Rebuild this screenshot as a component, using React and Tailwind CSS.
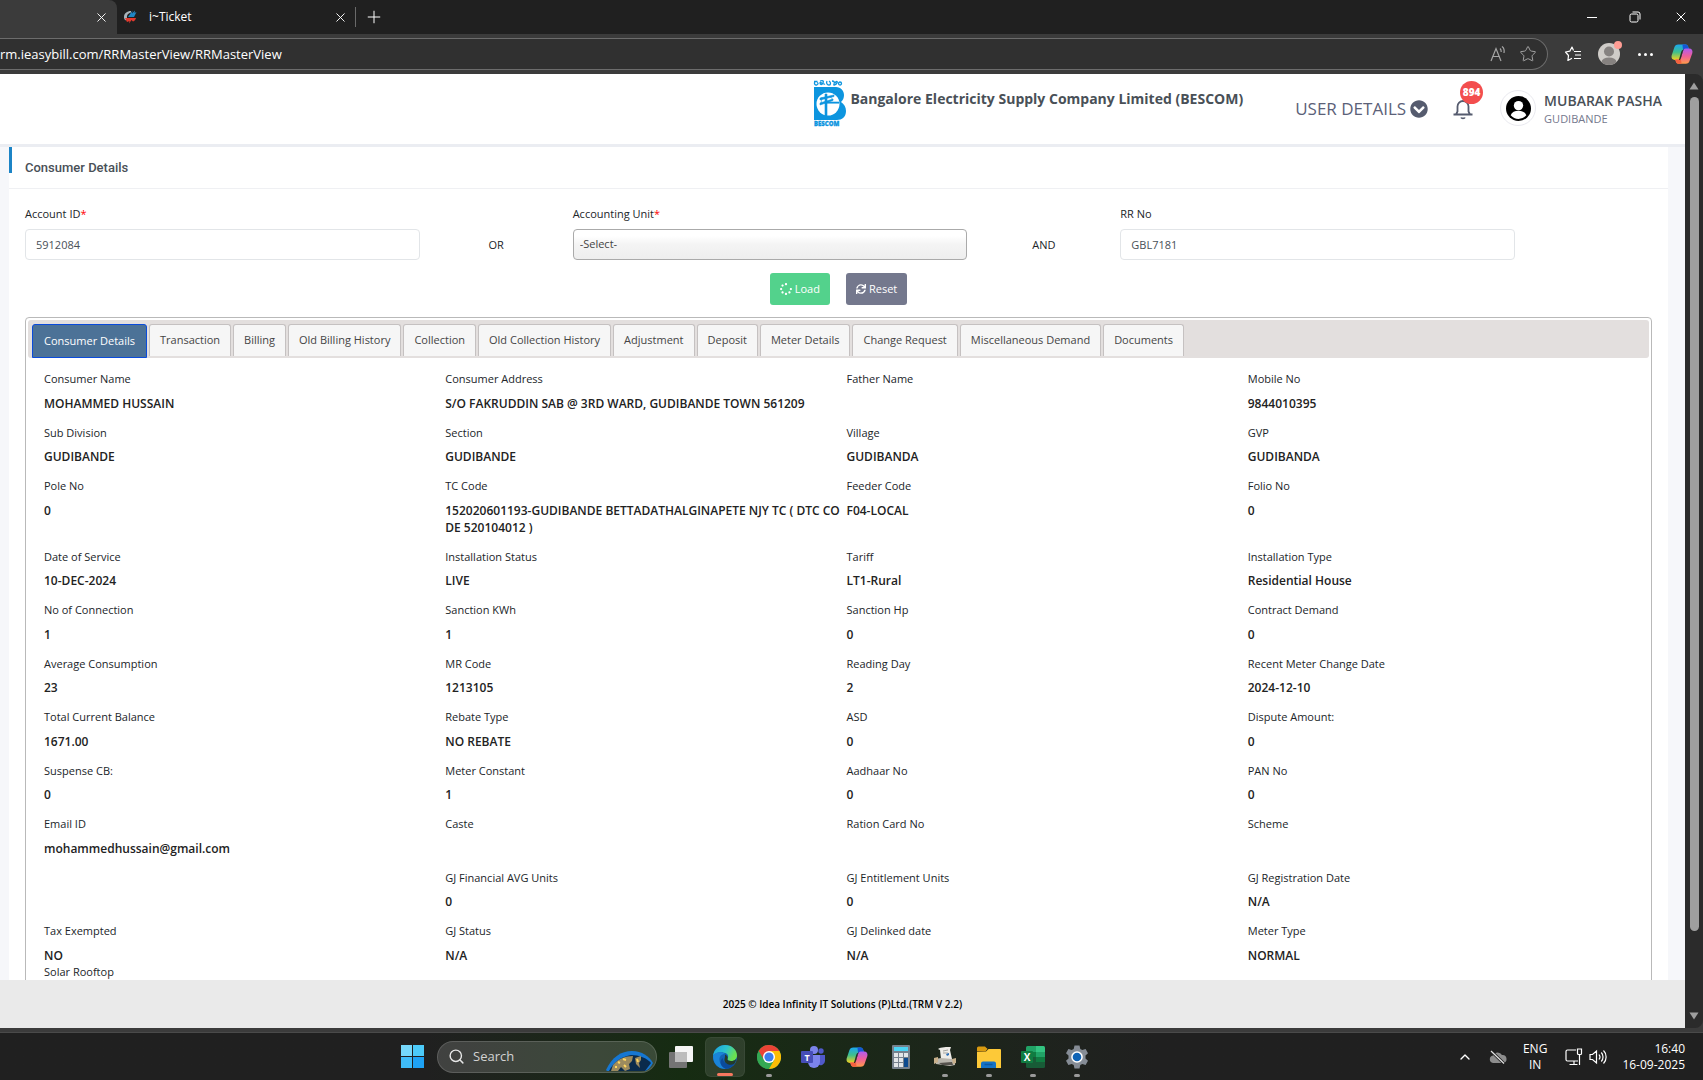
import { FaSpinner, FaSync, FaChevronCircleDown } from 'react-icons/fa'
import { X, Plus, Star, ChevronUp, Search } from 'lucide-react'

const tabs = ['Consumer Details', 'Transaction', 'Billing', 'Old Billing History', 'Collection', 'Old Collection History', 'Adjustment', 'Deposit', 'Meter Details', 'Change Request', 'Miscellaneous Demand', 'Documents']

const details = [
    [['Consumer Name', 'MOHAMMED HUSSAIN'], ['Consumer Address', 'S/O FAKRUDDIN SAB @ 3RD WARD, GUDIBANDE TOWN 561209'], ['Father Name', ''], ['Mobile No', '9844010395']],
    [['Sub Division', 'GUDIBANDE'], ['Section', 'GUDIBANDE'], ['Village', 'GUDIBANDA'], ['GVP', 'GUDIBANDA']],
    [['Pole No', '0'], ['TC Code', '152020601193-GUDIBANDE BETTADATHALGINAPETE NJY TC ( DTC CODE 520104012 )'], ['Feeder Code', 'F04-LOCAL'], ['Folio No', '0']],
    [['Date of Service', '10-DEC-2024'], ['Installation Status', 'LIVE'], ['Tariff', 'LT1-Rural'], ['Installation Type', 'Residential House']],
    [['No of Connection', '1'], ['Sanction KWh', '1'], ['Sanction Hp', '0'], ['Contract Demand', '0']],
    [['Average Consumption', '23'], ['MR Code', '1213105'], ['Reading Day', '2'], ['Recent Meter Change Date', '2024-12-10']],
    [['Total Current Balance', '1671.00'], ['Rebate Type', 'NO REBATE'], ['ASD', '0'], ['Dispute Amount:', '0']],
    [['Suspense CB:', '0'], ['Meter Constant', '1'], ['Aadhaar No', '0'], ['PAN No', '0']],
    [['Email ID', 'mohammedhussain@gmail.com'], ['Caste', ''], ['Ration Card No', ''], ['Scheme', '']],
    [['', ''], ['GJ Financial AVG Units', '0'], ['GJ Entitlement Units', '0'], ['GJ Registration Date', 'N/A']],
    [['Tax Exempted', 'NO'], ['GJ Status', 'N/A'], ['GJ Delinked date', 'N/A'], ['Meter Type', 'NORMAL']],
]

function CopilotIcon({ id, className }) {
    return (
        <svg viewBox="0 0 24 24" className={className} aria-hidden="true">
            <defs>
                <linearGradient id={`${id}a`} x1="0" y1="0" x2="0" y2="1">
                    <stop offset="0" stopColor="#1aa7f2" />
                    <stop offset=".5" stopColor="#3fbf8c" />
                    <stop offset="1" stopColor="#f5d21c" />
                </linearGradient>
                <linearGradient id={`${id}b`} x1="0" y1="0" x2="0" y2="1">
                    <stop offset="0" stopColor="#b05cf0" />
                    <stop offset=".5" stopColor="#ef5f9a" />
                    <stop offset="1" stopColor="#ff9a4a" />
                </linearGradient>
            </defs>
            <path d="M8 1.500h8c1.600 0 2.300 1 2.800 2.700l.8 2.800h-4c-1.500 0-2.300.8-2.800 2.400l-2 7c-.5 1.600-1.300 2.100-2.600 2.100H4.200C1.500 18.500 0 16.500.7 13.700L3.600 5C4.300 2.600 5.500 1.500 8 1.500z" fill={`url(#${id}a)`} />
            <path d="M12.500 1.500H16c1.600 0 2.300 1 2.800 2.700l.8 2.800h-4.200c-1 0-1.700.4-2.200 1.300z" fill="#1556d6" />
            <path d="M16 22.500H8c-1.600 0-2.300-1-2.800-2.700L4.600 18h3.900c1.400 0 2-.7 2.500-2.300l2.100-7C13.600 7.100 14.400 6 16 6h3.800c2.700 0 4.200 2 3.500 4.800L20.400 19c-.7 2.400-1.900 3.500-4.400 3.500z" fill={`url(#${id}b)`} />
            <path d="M4.600 18h3.900c1 0 1.700-.4 2.100-1.300l1 5.800H8c-1.600 0-2.300-1-2.800-2.700z" fill="#f4613f" />
            <path d="M12.800 9.500l-2 7c-.5 1.500-1.200 2-2.200 2l2.500-8.700c.5-1.700 1.500-2.800 3-2.800-.7.500-1 1.300-1.300 2.500z" fill="#2b2b2b" />
        </svg>
    )
}

function BescomLogo() {
    return (
        <svg viewBox="0 0 33 48" className="h-12 w-[33px] shrink-0" role="img" aria-label="BESCOM">
            <g fill="none" stroke="#0d95df" strokeWidth="1.300">
                <path d="M1 2.500h3.500M2.500 2.500c-2 1-1 4 1 3.500s2-2 .5-2.500M7 2c3-1 4 0 3 2s-3 2-3 0 3 2 5 1M14 2c-1 2 0 4 2 4s2-3 0-4M19 2c2 0 3 1 2 3s2 1 3-1-1-2-2 0" />
                <circle cx="27" cy="4.500" r="1.500" />
            </g>
            <path d="M1 8h22c5 0 8 4 8 8 0 3-1 5-3 7 3 2 5 5 5 9 0 6-4 9-9 9H1z" fill="#0d95df" />
            <circle cx="15" cy="25" r="11.500" fill="#fff" />
            <path d="M12 15h2v22h-2zM7 19l14-3v1.500L7 21zM7 24l13-4v1.500L7 26zM14 23h12v1.200H14zM17 17l3 4M9 18l-1 7" fill="#0d95df" stroke="#0d95df" strokeWidth=".6" />
            <text x="1" y="46.500" fontSize="6" fontWeight="800" fontFamily="Open Sans, sans-serif" fill="#0d95df" stroke="#0d95df" strokeWidth=".3">BESCOM</text>
        </svg>
    )
}

function BrowserChrome() {
    return (
        <header className="shrink-0 bg-[#3b3b3b] text-white">
            <div className="flex h-[34px] items-stretch bg-[#202020]">
                <div className="flex w-[117px] items-center justify-end rounded-tr-lg bg-[#3b3b3b] pr-2">
                    <button aria-label="Close tab"><X size={15} strokeWidth={1.500} /></button>
                </div>
                <div className="flex w-[238px] items-center gap-3 pl-1.5 pr-[7px]">
                    <svg viewBox="0 0 14 14" className="size-[14px]" aria-hidden="true">
                        <path d="M8 1C4 1 1 3.500 1 7c0 1.500.6 2.600 1.500 3.500L4 8C3.500 5 5.500 3 8 2.500z" fill="#a9b4bb" />
                        <path d="M5 7l4.500-6.500L9 3.500l3-3L11.500 3 13.500 2 11 7z" fill="#1f86c4" />
                        <path d="M2 8h11c-.5 2-1.500 3-3 3.500L8.500 10 6 13.500 6.500 11 4 12z" fill="#e23a2e" />
                    </svg>
                    <span className="grow text-xs">i~Ticket</span>
                    <button aria-label="Close tab"><X size={15} strokeWidth={1.500} /></button>
                </div>
                <div className="my-[7px] w-px bg-[#6a6a6a]" />
                <button className="ml-2" aria-label="New tab"><Plus size={20} strokeWidth={1.200} /></button>
                <div className="ml-auto flex items-center gap-8 pr-4">
                    <button aria-label="Minimize" className="flex h-4 w-[10px] items-center"><span className="h-px w-full bg-white" /></button>
                    <button aria-label="Restore">
                        <svg viewBox="0 0 12 12" className="size-3" fill="none" stroke="#fff">
                            <rect x="1" y="3" width="8" height="8" rx="1.500" />
                            <path d="M3.500 1h5.500a2 2 0 0 1 2 2v5.500" />
                        </svg>
                    </button>
                    <button aria-label="Close" className="-mr-0.5"><X size={16} strokeWidth={1.500} /></button>
                </div>
            </div>
            <div className="flex h-10 items-center gap-4 pr-2.5">
                <div className="flex h-8 grow items-center rounded-r-full border border-l-0 border-[#6c6c6c] bg-[#303030] pr-2.5">
                    <input aria-label="Address" defaultValue="rm.ieasybill.com/RRMasterView/RRMasterView" className="min-w-0 grow bg-transparent pt-px text-[13px] outline-none" />
                    <svg viewBox="0 0 18 18" className="mr-3 size-[18px]" fill="none" stroke="#a5a5a5" strokeWidth="1.200">
                        <path d="M2 16L7 3.500 12 16M4 11.500h6M11 3.500c1 1 1.300 2 1.200 3.500M13 1.500c2 1.500 2.500 4 2 6.500" />
                    </svg>
                    <Star size={18} strokeWidth={1.300} color="#a5a5a5" />
                </div>
                <svg viewBox="0 0 18 18" className="size-[18px]" fill="none" stroke="#fff" strokeWidth="1.200" strokeLinejoin="round">
                    <path d="M9.500 5.500L8 2 5.800 6.200 1.500 7l3 3.500-.6 5L8 13.300M10 6.500h7M11 10h6M10 13.500h7" />
                </svg>
                <div className="relative">
                    <svg viewBox="0 0 22 22" className="size-[22px]">
                        <clipPath id="profile"><circle cx="11" cy="11" r="11" /></clipPath>
                        <g clipPath="url(#profile)">
                            <rect width="22" height="22" fill="#cfccc8" />
                            <circle cx="11" cy="8.500" r="5" fill="#868280" />
                            <ellipse cx="11" cy="19" rx="7.500" ry="4.500" fill="#868280" />
                        </g>
                    </svg>
                    <span className="absolute -right-0.5 -top-0.5 size-2 rounded-full bg-[#ff9d94]" />
                </div>
                <button aria-label="Settings and more" className="flex gap-[3px] px-0.5">
                    <span className="size-[3px] rounded-full bg-white" />
                    <span className="size-[3px] rounded-full bg-white" />
                    <span className="size-[3px] rounded-full bg-white" />
                </button>
                <CopilotIcon id="side" className="size-[22px]" />
            </div>
        </header>
    )
}

function PageHeader() {
    return (
        <div className="flex h-[73px] shrink-0 items-start justify-end border-b-3 border-[#ebedf2] bg-white pr-[23px]">
            <div className="mt-[5px] flex gap-1">
                <BescomLogo />
                <h1 className="mt-2.5 text-sm font-bold text-[#495057]">Bangalore Electricity Supply Company Limited (BESCOM)</h1>
            </div>
            <button className="ml-[52px] mt-[23px] flex items-center gap-1 text-[17px] leading-6 text-[#5b6178]">
                USER DETAILS <FaChevronCircleDown size={18} color="#555b6e" />
            </button>
            <button aria-label="Notifications" className="relative ml-6 mt-6">
                <svg viewBox="0 0 22 22" className="size-[22px]" fill="none" stroke="#555b6e" strokeWidth="1.800">
                    <path d="M4 16.500l1.500-3V8.500a5.500 5.500 0 0 1 11 0v5l1.500 3M1.500 16.500h19" />
                    <path d="M9 19.500c.5 1.200 3.500 1.200 4 0" strokeWidth="1.600" />
                </svg>
                <span className="absolute -top-[17px] left-2 flex size-[23px] items-center justify-center rounded-full bg-[#f34e4e] text-[10px] font-extrabold text-white">894</span>
            </button>
            <div className="ml-[26px] mt-4 flex size-9 items-center justify-center rounded-full border border-[#e9e9ef]">
                <svg viewBox="0 0 24 24" className="size-[25px]">
                    <circle cx="12" cy="12" r="12" fill="#000" />
                    <circle cx="12" cy="9.200" r="4.500" fill="#fff" />
                    <path d="M4.500 18.500c1-3 4-4.300 7.500-4.300s6.500 1.300 7.500 4.300c-2 2.300-4.500 3.500-7.500 3.500s-5.500-1.200-7.500-3.500z" fill="#fff" />
                </svg>
            </div>
            <div className="ml-2 mt-[18px]">
                <div className="text-sm leading-[18px] font-semibold text-[#495057]">MUBARAK PASHA</div>
                <div className="text-[11px] leading-[18px] text-[#74788d]">GUDIBANDE</div>
            </div>
        </div>
    )
}

function SearchForm() {
    return (
        <form className="px-2" onSubmit={e => e.preventDefault()}>
            <div className="grid grid-cols-12 pt-[15px] text-[11px] text-[#212529]">
                <div className="col-span-3 px-2">
                    <label htmlFor="account" className="block leading-5">Account ID<span className="text-[#ff0000]">*</span></label>
                    <input id="account" defaultValue="5912084" className="mt-[5px] h-[31px] w-full rounded border border-[#e2e5e8] px-2.5 text-[#495057]" />
                </div>
                <div className="self-end pb-[5px] text-center leading-5">OR</div>
                <div className="col-span-3 px-2">
                    <label htmlFor="unit" className="block leading-5">Accounting Unit<span className="text-[#ff0000]">*</span></label>
                    <select id="unit" className="mt-[5px] h-[31px] w-full appearance-none rounded border border-[#aaaaaa] bg-linear-to-b from-white from-20% via-[#f4f4f4] via-50% to-[#eeeeee] px-1.5 text-[#444444]">
                        <option>-Select-</option>
                    </select>
                </div>
                <div className="self-end pb-[5px] text-center leading-5">AND</div>
                <div className="col-span-3 px-2">
                    <label htmlFor="rr" className="block leading-5">RR No</label>
                    <input id="rr" defaultValue="GBL7181" className="mt-[5px] h-[31px] w-full rounded border border-[#e2e5e8] px-2.5 text-[#495057]" />
                </div>
            </div>
            <div className="mt-[13px] flex justify-center gap-4 text-[11px] text-white">
                <button className="flex h-8 items-center gap-[3px] rounded-[3px] bg-[#53d28c] px-2.5"><FaSpinner size={12} />Load</button>
                <button className="flex h-8 items-center gap-[3px] rounded-[3px] bg-[#74788d] px-2.5"><FaSync size={10} />Reset</button>
            </div>
        </form>
    )
}

function Detail({ label, value }) {
    return (
        <div className="pr-1">
            <div className="text-[11px] leading-normal text-[#212529]">{label}</div>
            <div className="mt-[7px] text-xs leading-[17px] font-semibold break-all text-[#222222]">{value}</div>
        </div>
    )
}

function ConsumerTabs() {
    return (
        <section className="mx-4 mt-3 rounded-t border border-[#b9b9b9] p-0.5 text-[#333333]">
            <nav className="flex h-[38px] gap-0.5 rounded-[3px] bg-[#e3dfde] px-1 pt-1 text-[11px]">
                {tabs.map((tab, i) => (
                    <button
                        key={tab}
                        className={i === 0
                            ? 'h-[34px] rounded-t-[3px] border border-[#0a4bdc] bg-[#4c7297] px-[11px] text-white'
                            : 'h-8 rounded-t-[3px] border border-b-0 border-[#c5c1c1] bg-[#f6f6f6] px-2.5 text-[#454545]'}
                    >
                        {tab}
                    </button>
                ))}
            </nav>
            <div className="pl-4 pt-[13px]">
                {details.map((row, i) => (
                    <div key={i} className={`grid grid-cols-4 ${i < details.length - 1 ? 'pb-[13px]' : ''}`}>
                        {row.map(([label, value], j) => <Detail key={j} label={label} value={value} />)}
                    </div>
                ))}
                <Detail label="Solar Rooftop" value="" />
            </div>
        </section>
    )
}

function Scrollbar() {
    return (
        <div className="flex w-[18px] shrink-0 flex-col items-center rounded-tr-lg rounded-br-lg bg-[#2b2b2b] py-2">
            <svg viewBox="0 0 10 8" className="h-2 w-2.5 shrink-0"><path d="M5 .5L9.500 7.500H.5z" fill="#9f9f9f" /></svg>
            <div className="mt-[7px] h-[834px] w-[9px] rounded-full bg-[#9f9f9f]" />
            <svg viewBox="0 0 10 8" className="mt-auto h-2 w-2.5 shrink-0"><path d="M5 7.500L.5.5h9z" fill="#9f9f9f" /></svg>
        </div>
    )
}

function AppSlot({ label, active, running, children }) {
    return (
        <button aria-label={label} className={`relative flex h-10 w-10 items-center justify-center rounded-md ${active ? 'border border-white/5 bg-white/10' : ''}`}>
            {children}
            {active && <span className="absolute bottom-0 h-[3px] w-4 rounded-full bg-[#f7785f]" />}
            {running && <span className="absolute bottom-0 h-[3px] w-1.5 rounded-full bg-[#9a9a9a]" />}
        </button>
    )
}

function Taskbar() {
    return (
        <footer className="flex h-[47px] shrink-0 items-center bg-linear-to-r from-[#202020] from-25% via-[#162c12] via-40% to-[#202020] to-68% text-white">
            <div className="flex grow items-center pl-[401px]">
                <button aria-label="Start" className="grid size-[23px] grid-cols-2 gap-px">
                    <span className="bg-[#76d8fb]" />
                    <span className="bg-[#4ccbfa]" />
                    <span className="bg-[#3fbcf8]" />
                    <span className="bg-[#1ea2f5]" />
                </button>
                <label className="ml-[13px] flex h-8 w-[220px] items-center gap-2 overflow-hidden rounded-full border border-white/15 bg-white/15 pl-2.5 pr-0.5">
                    <Search size={17} color="#e6e6e6" className="shrink-0" />
                    <input aria-label="Search" placeholder="Search" className="w-0 grow bg-transparent text-[13px] outline-none placeholder:text-[#d2d2d2]" />
                    <svg viewBox="0 0 48 22" className="h-[22px] w-12 self-end">
                        <path d="M0 20C6 7 15 1 26 1c10 0 17 5 21 12-2 4-5 7-8 8H1z" fill="#1677d2" />
                        <path d="M3 21c4-8 11-14 22-16 8 0 16 3 20 8l-6 8z" fill="#0a2b4c" />
                        <path d="M7 15c5-6 12-9 20-9l-1 5-3 3 1 5-5 2-4-4-3 4H5zM29 8l6-2v4l-2 3 1 5-4-4z" fill="#9c8b5f" />
                        <path d="M12 12l2 1M17 9l3 1M18 15l2 2M31 9l1 3M9 17h2" stroke="#ffd65e" strokeWidth="2" />
                    </svg>
                </label>
                <div className="ml-1 flex items-center gap-1">
                    <AppSlot label="Task view">
                        <svg viewBox="0 0 24 22" className="h-[22px] w-6">
                            <rect x="6" width="18" height="16" rx="1" fill="#f5f5f5" />
                            <rect y="6" width="18" height="16" rx="1" fill="#747474" />
                            <rect x="6" y="6" width="12" height="10" fill="#bcbcbc" />
                        </svg>
                    </AppSlot>
                    <AppSlot label="Edge" active>
                        <svg viewBox="0 0 24 24" className="size-6">
                            <defs>
                                <linearGradient id="edge" x1="0" y1="0" x2="1" y2=".4">
                                    <stop offset="0" stopColor="#1ba0dd" />
                                    <stop offset=".55" stopColor="#2cc3cf" />
                                    <stop offset="1" stopColor="#6be04f" />
                                </linearGradient>
                            </defs>
                            <circle cx="12" cy="12" r="12" fill="#1263b5" />
                            <path d="M0 11C1 4 6 0 12 0c7 0 12 5 12 10.500 0 3.500-2.500 5.500-6 5.500-2.500 0-4-1-3.500-2.200 1.500-2 .5-5.800-3.500-6C6 6.500 2 8 0 11z" fill="url(#edge)" />
                            <path d="M0 11c3-4.500 9-4.500 12-2-4 0-6 3-5.500 6.500.6 4.500 4 7.500 8 8.200C6 25 0 19 0 11z" fill="#1a84d8" />
                            <path d="M10 13c-.5 4 4 7 8.500 5.500 2-.5 3.200-1.300 3.500-.8C20 21 17 23.500 13 24 7 22 6 15 10 13z" fill="#0b4a9b" />
                            <path d="M12 9.500c2.500 1 3 3 2.500 4.500-.5 1 1 2 3.500 2 2 0 4-.6 5-2 0 2-1 4-2 5-4 2-9 0-9.500-3.500-.3-2 .8-3 .5-6z" fill="#253a2a" />
                        </svg>
                    </AppSlot>
                    <AppSlot label="Chrome" running>
                        <svg viewBox="0 0 24 24" className="size-6">
                            <circle cx="12" cy="12" r="12" fill="#34a853" />
                            <path d="M12 12L1.600 6A12 12 0 0 1 22.400 6z" fill="#ea4335" />
                            <path d="M12 6h10.400A12 12 0 0 1 12 24l5.200-9z" fill="#fbbc05" />
                            <path d="M1.600 6L6.800 15 12 12 12 6z" fill="#ea4335" />
                            <path d="M1.600 6L6.800 15a6 6 0 0 0 5.200 3l-.2 6A12 12 0 0 1 1.600 6z" fill="#34a853" />
                            <circle cx="12" cy="12" r="6" fill="#fff" />
                            <circle cx="12" cy="12" r="4.600" fill="#3b7ded" />
                        </svg>
                    </AppSlot>
                    <AppSlot label="Teams">
                        <svg viewBox="0 0 24 22" className="h-[22px] w-6">
                            <circle cx="20" cy="5" r="2.700" fill="#5059c9" />
                            <path d="M15 9h9v6a4.500 4.500 0 0 1-7 3.500z" fill="#5059c9" />
                            <circle cx="13" cy="4" r="4" fill="#7b83eb" />
                            <path d="M7 9h12v7a6 6 0 0 1-12 0z" fill="#7b83eb" />
                            <rect y="5" width="12" height="12" rx="1" fill="#464eb8" />
                            <text x="6" y="14.500" textAnchor="middle" fontSize="9" fontWeight="700" fill="#fff" fontFamily="Open Sans, sans-serif">T</text>
                        </svg>
                    </AppSlot>
                    <AppSlot label="Copilot"><CopilotIcon id="task" className="size-[22px]" /></AppSlot>
                    <AppSlot label="Calculator">
                        <svg viewBox="0 0 18 24" className="h-6 w-[18px]">
                            <rect width="18" height="24" rx="1" fill="#76818d" />
                            <rect x="2" y="2" width="14" height="4" fill="#4cd3f4" />
                            <path d="M2 8h4v4H2zM7 8h4v4H7zM12 8h4v4h-4zM2 13h4v4H2zM7 13h4v4H7zM2 18h4v4H2zM7 18h4v4H7z" fill="#e3e6e9" />
                            <path d="M12 13h4v9h-4z" fill="#0d4a8f" />
                        </svg>
                    </AppSlot>
                    <AppSlot label="Scanner" running>
                        <svg viewBox="0 0 24 22" className="h-[22px] w-6">
                            <path d="M5 3c3-2 9-2 13-2l-1 3 2 9H8L7 4z" fill="#eeece7" />
                            <path d="M2 13l6-1 11 1 3 2v4l-5 1-14-2z" fill="#b9b6ae" />
                            <path d="M1 12l4-1v5l-4 2zM19 13l4-1v5l-3 1z" fill="#c8b08c" />
                            <path d="M6 17l13-1 1 3H9z" fill="#55524d" />
                            <path d="M10 5l5-1M10 7h5" stroke="#a5a49f" />
                            <path d="M13 8l3-1v2l-2 1z" fill="#2d6fb8" />
                        </svg>
                    </AppSlot>
                    <AppSlot label="File Explorer" running>
                        <svg viewBox="0 0 24 22" className="h-[22px] w-6">
                            <path d="M0 2a1.500 1.500 0 0 1 1.500-1.500H8L10.500 3H0z" fill="#d99a10" />
                            <path d="M0 6l9-.5L11.500 3H23a1 1 0 0 1 1 1v18H0z" fill="#fdc938" />
                            <path d="M0 2h9l1.500 1-2 2.500H0z" fill="#d99a10" />
                            <path d="M4 22v-4.500A2 2 0 0 1 6 15.500h11a2 2 0 0 1 2 2V22z" fill="#1572c4" />
                            <path d="M7.500 18.500h8" stroke="#0d58a0" strokeWidth="1.500" />
                        </svg>
                    </AppSlot>
                    <AppSlot label="Excel" running>
                        <svg viewBox="0 0 24 22" className="h-[22px] w-6">
                            <path d="M5 1.500A1.500 1.500 0 0 1 6.500 0H15v6H5z" fill="#21a366" />
                            <path d="M15 0h7.500A1.500 1.500 0 0 1 24 1.500V6h-9z" fill="#33c481" />
                            <path d="M5 6h10v5H5z" fill="#107c41" />
                            <path d="M15 6h9v5h-9z" fill="#21a366" />
                            <path d="M5 11h10v5H5z" fill="#185c37" />
                            <path d="M15 11h9v5h-9z" fill="#107c41" />
                            <path d="M5 16h19v4.500a1.500 1.500 0 0 1-1.500 1.500h-16A1.500 1.500 0 0 1 5 20.500z" fill="#185c37" />
                            <rect y="5" width="12" height="12" rx="1" fill="#107c41" />
                            <text x="6" y="14.500" textAnchor="middle" fontSize="10" fontWeight="700" fill="#fff" fontFamily="Open Sans, sans-serif">X</text>
                        </svg>
                    </AppSlot>
                    <AppSlot label="Settings" running>
                        <svg viewBox="0 0 24 24" className="size-6">
                            <path d="M9.500.5h5l.8 3.400 2 1.100 3.300-1L23 8.200l-2.500 2.400v2.800L23 15.800 20.600 20l-3.300-1-2 1.100-.8 3.400h-5l-.8-3.400-2-1.100-3.300 1L1 15.800l2.500-2.400v-2.800L1 8.200 3.400 4l3.300 1 2-1.100z" fill="#858c95" />
                            <circle cx="12" cy="12" r="5.800" fill="#fff" />
                            <circle cx="12" cy="12" r="4.300" fill="#0f63b5" />
                        </svg>
                    </AppSlot>
                </div>
            </div>
            <div className="flex items-center pr-[18px] text-center text-xs leading-4">
                <ChevronUp size={16} />
                <svg viewBox="0 0 18 14" className="ml-4 h-[14px] w-[18px]">
                    <path d="M4 13a3.800 3.800 0 0 1 0-7.500A5 5 0 0 1 13 5a4 4 0 0 1 1 8z" fill="#8d8d8d" />
                    <path d="M2 1l13 12.500" stroke="#202020" strokeWidth="3" />
                    <path d="M2 1l13 12.500" stroke="#e5e5e5" strokeWidth="1.200" />
                </svg>
                <div className="ml-4">ENG<br />IN</div>
                <svg viewBox="0 0 18 18" className="ml-[18px] size-[18px]" fill="none" stroke="#fff" strokeWidth="1.200">
                    <path d="M11 2H2.500A1.500 1.500 0 0 0 1 3.500v8A1.500 1.500 0 0 0 2.500 13H13M9 13v3.500M4.500 16.500h8M12.500 2v3.500a1 1 0 0 0 1 1h2a1 1 0 0 0 1-1V1h-4zM14.500 6.500V17" />
                </svg>
                <svg viewBox="0 0 18 16" className="ml-1.5 h-4 w-[18px]" fill="none" stroke="#fff" strokeWidth="1.200">
                    <path d="M1 5.500h2.500L7.500 2v12l-4-3.500H1zM10 5.500c1.200 1.500 1.200 3.500 0 5M12.300 3.500c2.300 2.500 2.300 6.500 0 9M14.500 1.500c3.500 3.500 3.500 9.500 0 13" />
                </svg>
                <div className="ml-[15px] text-right">16:40<br />16-09-2025</div>
            </div>
        </footer>
    )
}

export default function App() {
    return (
        <div className="flex h-screen flex-col overflow-hidden bg-[#3b3b3b] font-['Open_Sans','Noto_Sans',sans-serif]">
            <BrowserChrome />
            <div className="flex min-h-0 grow">
                <div className="flex min-w-0 grow flex-col bg-[#f6f7fa]">
                    <PageHeader />
                    <main className="ml-[9px] mr-[17px] min-h-0 grow overflow-hidden bg-white">
                        <h2 className="flex h-[42px] items-start border-b border-[#eff0f3] font-['Roboto',sans-serif] text-[13px] leading-[42px] font-medium text-[#495057]">
                            <span className="mr-[13px] h-[26px] w-[3px] bg-[#1c84c6]" />
                            Consumer Details
                        </h2>
                        <SearchForm />
                        <ConsumerTabs />
                    </main>
                    <div className="flex h-12 shrink-0 items-center justify-center bg-[#eaeaea] text-[10px] font-semibold text-black">
                        2025 © Idea Infinity IT Solutions (P)Ltd.(TRM V 2.2)
                    </div>
                </div>
                <Scrollbar />
            </div>
            <div className="h-[5px] shrink-0 border-b border-[#4a4a4a]" />
            <Taskbar />
        </div>
    )
}
